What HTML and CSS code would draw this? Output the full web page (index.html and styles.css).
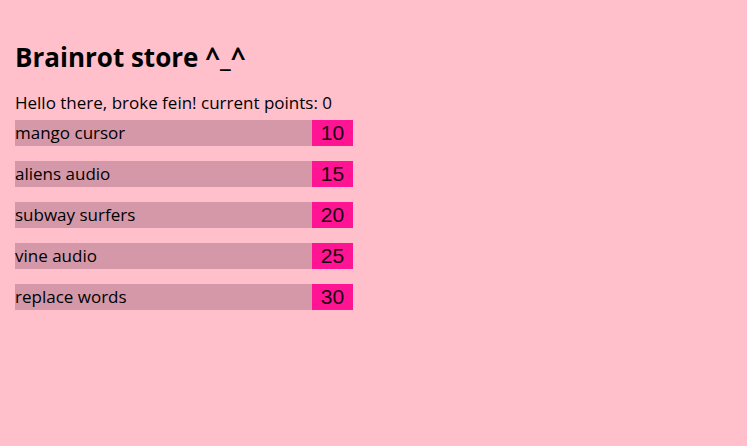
FILE: index.html
```html
<!DOCTYPE html>
<html>
<head>
<meta charset="utf-8">
<link rel="stylesheet" href="styles.css">
</head>
<body>
<h1 class="title">Brainrot store ^_^</h1>
<p class="greeting">Hello there, broke fein! current points: 0</p>
<div class="items">
  <div class="item"><span class="name">mango cursor</span><button class="price">10</button></div>
  <div class="item"><span class="name">aliens audio</span><button class="price">15</button></div>
  <div class="item"><span class="name">subway surfers</span><button class="price">20</button></div>
  <div class="item"><span class="name">vine audio</span><button class="price">25</button></div>
  <div class="item"><span class="name">replace words</span><button class="price">30</button></div>
</div>
</body>
</html>
```
FILE: styles.css
```css
html, body {
  margin: 0;
  padding: 0;
}
body {
  background: #ffc0cb;
  font-family: "Open Sans", "Noto Sans", sans-serif;
  color: #000;
  padding: 0 15px;
}
.title {
  margin: 0;
  padding-top: 40px;
  font-size: 26px;
  line-height: 34px;
  font-weight: 700;
}
.greeting {
  margin: 17px 0 0;
  font-size: 17px;
  line-height: 24px;
}
.items {
  display: flex;
  flex-direction: column;
  gap: 15px;
  width: 338px;
  margin-top: 5px;
}
.item {
  display: flex;
  align-items: stretch;
  height: 26px;
  background: #d598a8;
}
.name {
  flex: 1;
  font-size: 17px;
  line-height: 26px;
}
.price {
  width: 41px;
  border: none;
  margin: 0;
  padding: 0 0 1px;
  background: #ff1493;
  color: #1a0010;
  font-family: "Liberation Sans", Arial, sans-serif;
  font-size: 21px;
  line-height: 25px;
  text-align: center;
}
```
